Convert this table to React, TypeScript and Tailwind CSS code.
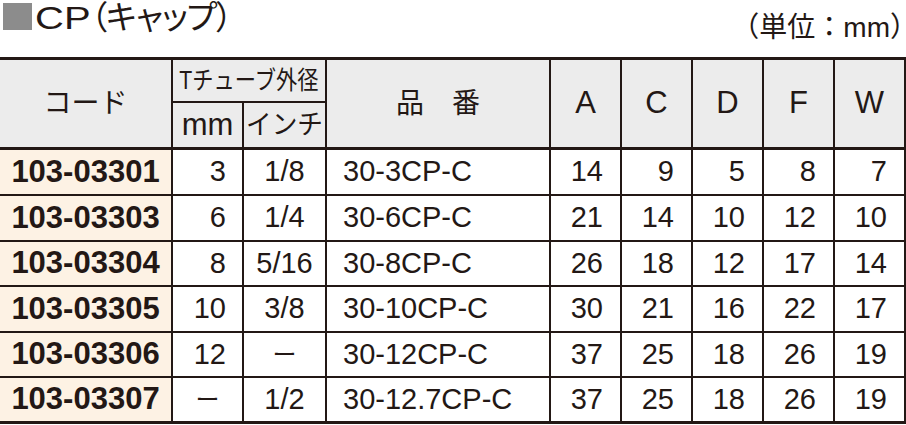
import React from 'react';

const rows = [
  ['103-03301', '3', '1/8', '30-3CP-C', '14', '9', '5', '8', '7'],
  ['103-03303', '6', '1/4', '30-6CP-C', '21', '14', '10', '12', '10'],
  ['103-03304', '8', '5/16', '30-8CP-C', '26', '18', '12', '17', '14'],
  ['103-03305', '10', '3/8', '30-10CP-C', '30', '21', '16', '22', '17'],
  ['103-03306', '12', 'ー', '30-12CP-C', '37', '25', '18', '26', '19'],
  ['103-03307', 'ー', '1/2', '30-12.7CP-C', '37', '25', '18', '26', '19'],
];

const cols = 'grid-cols-[171px_69px_81px_222px_69px_69px_69px_69px_69px]';

const Dash = () => <span className="text-[24px]">ー</span>;

const App = () => {
  return (
    <div className="w-[906px] h-[425px] overflow-hidden bg-white text-[#231815] font-['Liberation_Sans','Noto_Sans_CJK_JP',sans-serif]">
      <div className="h-[57px] flex justify-between">
        <div className="flex items-start">
          <div className="w-[29px] h-[27px] mt-[3px] ml-[3px] bg-[#8c8c8c]" />
          <div className="ml-[3px] text-[32px] leading-[36px] whitespace-nowrap">
            <span className="inline-block origin-left [transform:scaleX(1.25)] mr-[11px]">CP</span>
            <span className="text-[33px] tracking-[-1px] [font-feature-settings:'palt']">（キャップ）</span>
          </div>
        </div>
        <div className="self-end mb-[15px] pr-[2px] text-[28px] leading-[28px] whitespace-nowrap">
          （単位：mm<span className="[font-feature-settings:'halt']">）</span>
        </div>
      </div>

      <div className={`grid ${cols} grid-rows-[41px_44px] gap-[2px] pr-[2px] bg-[#231815] border-y-[3px] border-[#231815]`}>
        <div className="row-span-2 bg-[#ececec] flex items-center justify-center text-[28px]">コード</div>
        <div className="col-span-2 bg-[#ececec] flex items-center justify-center text-[25px] whitespace-nowrap">
          <span className="inline-block [transform:scaleX(0.85)]">Tチューブ外径</span>
        </div>
        <div className="row-span-2 bg-[#ececec] flex items-center justify-center text-[28px]">品　番</div>
        {['A', 'C', 'D', 'F', 'W'].map((h) => (
          <div key={h} className="row-span-2 bg-[#ececec] flex items-center justify-center text-[31px]">{h}</div>
        ))}
        <div className="bg-[#ececec] flex items-center justify-center text-[31px]">mm</div>
        <div className="bg-[#ececec] flex items-center justify-center text-[27px] whitespace-nowrap">
          <span className="inline-block [transform:scaleX(0.95)]">インチ</span>
        </div>
      </div>

      <div className={`grid ${cols} grid-rows-[44px_44px_43px_44px_43px_43px] gap-[2px] pr-[2px] bg-[#231815] border-b-[3px] border-[#231815] text-[29px]`}>
        {rows.map((r) => (
          <React.Fragment key={r[0]}>
            <div className="bg-[#fdf2e4] flex items-center justify-center font-bold text-[31px]">{r[0]}</div>
            {r[1] === 'ー' ? (
              <div className="bg-white flex items-center justify-center"><Dash /></div>
            ) : (
              <div className="bg-white flex items-center justify-end pr-[16px]">{r[1]}</div>
            )}
            <div className="bg-white flex items-center justify-center">{r[2] === 'ー' ? <Dash /> : r[2]}</div>
            <div className="bg-white flex items-center pl-[16px] whitespace-nowrap">{r[3]}</div>
            {r.slice(4).map((v, i) => (
              <div key={i} className="bg-white flex items-center justify-end pr-[17px]">{v}</div>
            ))}
          </React.Fragment>
        ))}
      </div>
    </div>
  );
};

export default App;
